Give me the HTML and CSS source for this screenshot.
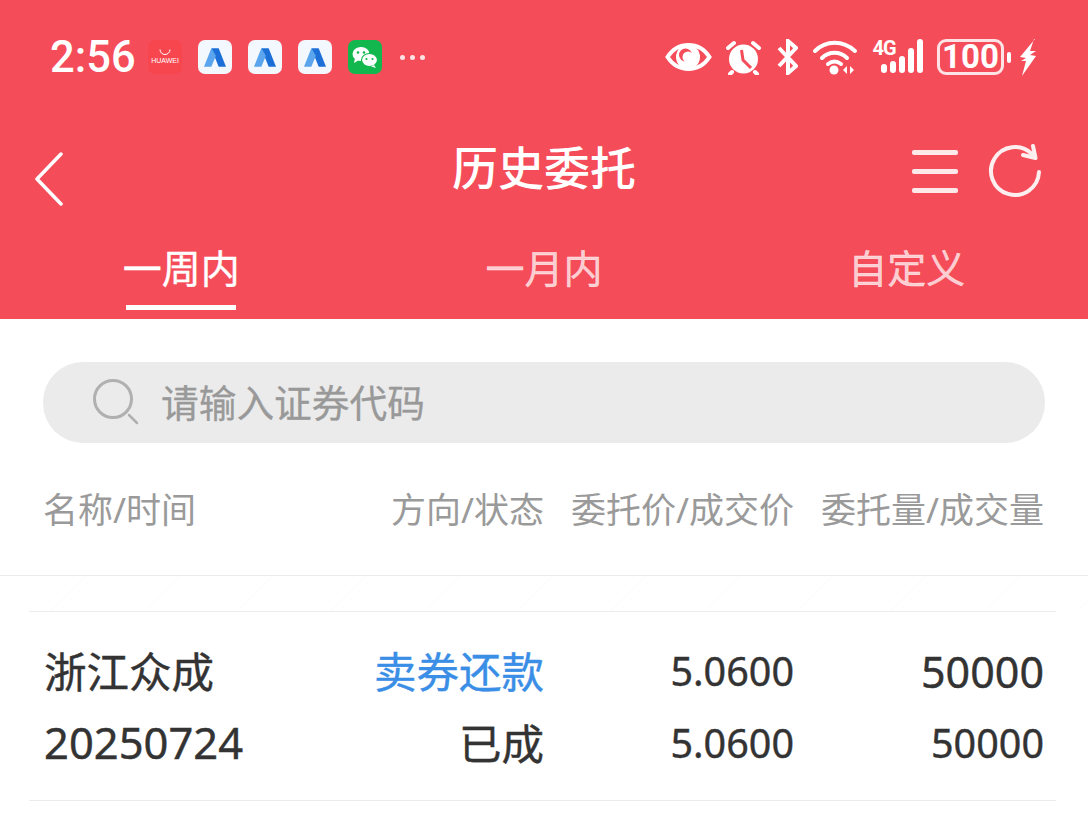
FILE: index.html
```html
<!DOCTYPE html>
<html lang="zh-CN">

<head>
    <title>历史委托</title>
    <meta name="viewport" content="width=device-width, initial-scale=1.0">
    <link rel="stylesheet" href="styles.css">
</head>

<body>
    <header class="top">
        <!-- Status Bar -->
        <div class="status-bar">
            <div class="status-left">
                <span class="time">2:56</span>
                <div class="app-icons">
                    <div class="app-icon huawei">
                        <svg width="16" height="6" viewBox="0 0 16 6" fill="none" stroke="white" stroke-width="1">
                            <path d="M3 0.5a5 5 0 0 0 10 0"></path>
                        </svg>
                        <span>HUAWEI</span>
                    </div>
                    <div class="app-icon ads">
                        <svg width="22" height="19" viewBox="0 0 24 20">
                            <path d="M8 0h8l8 20h-8z" fill="#1c6fd6"></path>
                            <path d="M8 0l5 8-5 12H0z" fill="#5aa5ee"></path>
                        </svg>
                    </div>
                    <div class="app-icon ads">
                        <svg width="22" height="19" viewBox="0 0 24 20">
                            <path d="M8 0h8l8 20h-8z" fill="#1c6fd6"></path>
                            <path d="M8 0l5 8-5 12H0z" fill="#5aa5ee"></path>
                        </svg>
                    </div>
                    <div class="app-icon ads">
                        <svg width="22" height="19" viewBox="0 0 24 20">
                            <path d="M8 0h8l8 20h-8z" fill="#1c6fd6"></path>
                            <path d="M8 0l5 8-5 12H0z" fill="#5aa5ee"></path>
                        </svg>
                    </div>
                    <div class="app-icon wechat">
                        <svg width="28" height="24" viewBox="0 0 28 24">
                            <ellipse cx="10" cy="9" rx="8.500" ry="7" fill="white"></ellipse>
                            <path d="M4 13l-1 5 5-3z" fill="white"></path>
                            <ellipse cx="18.500" cy="15" rx="8" ry="6.500" fill="white" stroke="#12b84e" stroke-width="1.200"></ellipse>
                            <path d="M23 20l2 3-5-1.500z" fill="white"></path>
                            <circle cx="7" cy="7.500" r="1.300" fill="#12b84e"></circle>
                            <circle cx="13" cy="7.500" r="1.300" fill="#12b84e"></circle>
                            <circle cx="15.500" cy="14" r="1.100" fill="#12b84e"></circle>
                            <circle cx="21.500" cy="14" r="1.100" fill="#12b84e"></circle>
                        </svg>
                    </div>
                    <div class="more-dots"><i></i><i></i><i></i></div>
                </div>
            </div>
            <div class="status-right">
                <!-- Eye -->
                <svg width="47" height="30" viewBox="0 0 47 30">
                    <path d="M2.500 15C8 6.500 15 3 23.500 3S39 6.500 44.500 15C39 23.500 32 27 23.500 27S8 23.500 2.500 15z" fill="none" stroke="white" stroke-width="4"></path>
                    <circle cx="23" cy="15" r="12" fill="white"></circle>
                    <circle cx="20.500" cy="13" r="6.500" fill="#f54c5a"></circle>
                    <circle cx="23" cy="15" r="5.500" fill="white"></circle>
                </svg>
                <!-- Alarm -->
                <svg width="36" height="36" viewBox="0 0 36 36">
                    <circle cx="17.500" cy="20" r="14.500" fill="white"></circle>
                    <path d="M2 9l6-5M33 9l-6-5M6 33l-2 2M29 33l2 2" stroke="white" stroke-width="4" stroke-linecap="round"></path>
                    <path d="M15.500 11l1.500 10 8 8" fill="none" stroke="#f54c5a" stroke-width="3"></path>
                </svg>
                <!-- Bluetooth -->
                <svg width="21" height="36" viewBox="0 0 21 36" fill="none" stroke="white" stroke-width="4">
                    <path d="M2 9l17 18-8 7V2l8 7L2 27"></path>
                </svg>
                <!-- Wifi -->
                <svg width="46" height="36" viewBox="0 0 46 36" fill="none" stroke="white" stroke-width="4" stroke-linecap="round">
                    <path d="M3 12C14 1 31 1 43 12"></path>
                    <path d="M10 19c7-7 18-7 25 0"></path>
                    <path d="M16 25c4-3 9-3 13 0"></path>
                    <circle cx="22" cy="31" r="4.500" fill="white" stroke="none"></circle>
                    <path d="M35 27l-4 4 4 4zM38 27l4 4-4 4z" fill="white" stroke="none"></path>
                </svg>
                <!-- 4G + signal -->
                <div class="signal">
                    <span class="net">4G</span>
                    <div class="bars"><i class="b1"></i><i class="b2"></i><i class="b3"></i><i class="b4"></i><i class="b5"></i></div>
                </div>
                <!-- Battery -->
                <div class="battery">
                    <div class="battery-body">100</div>
                    <div class="battery-tip"></div>
                </div>
                <!-- Charging bolt -->
                <svg class="bolt" width="18" height="37" viewBox="0 0 18 37">
                    <path d="M16 0L1 18l6 1-5 3h5L3 37l14-20-6-1 6-4h-6l4-12z" fill="white"></path>
                </svg>
            </div>
        </div>

        <!-- Navigation -->
        <nav class="nav-bar">
            <svg class="back" width="28" height="54" viewBox="0 0 28 54" fill="none" stroke="white" stroke-width="3.500" stroke-linecap="round" stroke-linejoin="round">
                <path d="M26 2L2 27l24 25"></path>
            </svg>
            <h1 class="nav-title">历史委托</h1>
            <div class="nav-actions">
                <div class="menu-btn"><i></i><i></i><i></i></div>
                <svg width="54" height="54" viewBox="0 0 54 54" fill="none" stroke="#fdeef0" stroke-width="4" stroke-linecap="round" stroke-linejoin="round">
                    <path d="M51 28A24 24 0 1 1 44 10"></path>
                    <path d="M45 2l2.500 12L35 11"></path>
                </svg>
            </div>
        </nav>

        <!-- Tabs -->
        <div class="tabs">
            <div class="tab active">一周内</div>
            <div class="tab">一月内</div>
            <div class="tab">自定义</div>
        </div>
    </header>

    <!-- Search -->
    <section class="search-wrap">
        <div class="search-box">
            <svg width="48" height="48" viewBox="0 0 48 48" fill="none" stroke="#b0b0b0" stroke-width="3" stroke-linecap="round">
                <circle cx="20" cy="20" r="18.500"></circle>
                <path d="M36 36l8 8" stroke-width="2.500"></path>
            </svg>
            <span class="search-hint">请输入证券代码</span>
        </div>
    </section>

    <!-- Table -->
    <div class="table-head">
        <div>名称/时间</div>
        <div class="num">方向/状态</div>
        <div class="num">委托价/成交价</div>
        <div class="num">委托量/成交量</div>
    </div>
    <div class="band"></div>

    <div class="order-row">
        <div class="cell-line">
            <div class="stock">浙江众成</div>
            <div class="num dir">卖券还款</div>
            <div class="num price">5.0600</div>
            <div class="num price qty">50000</div>
        </div>
        <div class="cell-line">
            <div class="stock date">20250724</div>
            <div class="num stock">已成</div>
            <div class="num price">5.0600</div>
            <div class="num price">50000</div>
        </div>
    </div>
</body>

</html>
```
FILE: styles.css
```css
* {
    box-sizing: border-box;
}

body {
    font-family: "Noto Sans", "Noto Sans CJK SC", sans-serif;
    background-color: white;
    margin: 0;
    padding: 0;
    height: 825px;
    overflow: hidden;
}

.top {
    background-color: #f54c5a;
    color: white;
    height: 319px;
}

/* Status bar */
.status-bar {
    display: flex;
    justify-content: space-between;
    align-items: center;
    height: 114px;
    padding: 0 51px 0 50px;
}

.status-left,
.status-right,
.app-icons {
    display: flex;
    align-items: center;
}

.time {
    font-family: Roboto, sans-serif;
    font-size: 43.500px;
    font-weight: 500;
    width: 98px;
}

.app-icons {
    gap: 16px;
}

.app-icon {
    display: flex;
    align-items: center;
    justify-content: center;
    width: 34px;
    height: 34px;
    border-radius: 7px;
}

.huawei {
    flex-direction: column;
    background-color: #f8464f;
    gap: 2px;
}

.huawei span {
    font-family: "Liberation Sans", sans-serif;
    font-size: 7px;
    line-height: 8px;
}

.ads {
    background-color: #f3f8fe;
}

.wechat {
    background-color: #12b84e;
}

.more-dots {
    display: flex;
    gap: 5px;
    margin-left: 2px;
}

.more-dots i {
    width: 5px;
    height: 5px;
    border-radius: 50%;
    background-color: #fde3e5;
}

.status-right {
    gap: 14.500px;
}

.signal {
    position: relative;
    width: 50px;
    height: 36px;
}

.net {
    position: absolute;
    left: 0;
    top: 0;
    font-family: Roboto, sans-serif;
    font-size: 20px;
    line-height: 18px;
    font-weight: 700;
    letter-spacing: -1px;
}

.bars {
    display: flex;
    align-items: flex-end;
    justify-content: flex-end;
    gap: 3px;
    height: 34px;
}

.bars i {
    width: 6px;
    border-radius: 3px;
    background-color: white;
}

.bars .b1 {
    height: 9px;
}

.bars .b2 {
    height: 12px;
}

.bars .b3 {
    height: 17px;
}

.bars .b4 {
    height: 25px;
}

.bars .b5 {
    height: 34px;
}

.battery {
    display: flex;
    align-items: center;
    gap: 3px;
}

.battery-body {
    width: 67px;
    height: 36px;
    border: 3px solid #fde3e5;
    border-radius: 9px;
    font-family: Roboto, sans-serif;
    font-size: 33px;
    font-weight: 700;
    line-height: 30px;
    text-align: center;
}

.battery-tip {
    width: 4px;
    height: 11px;
    border-radius: 2px;
    background-color: white;
}

.bolt {
    margin-left: -6.500px;
}

/* Nav bar */
.nav-bar {
    display: grid;
    grid-template-columns: 1fr auto 1fr;
    align-items: center;
    height: 110px;
    padding: 0 46px;
}

.back {
    margin: 20px 0 0 -11px;
}

.nav-title {
    margin: 0;
    padding-bottom: 4px;
    font-size: 46px;
    font-weight: 500;
    line-height: 60px;
}

.nav-actions {
    display: flex;
    align-items: center;
    justify-content: flex-end;
    gap: 30px;
    margin-top: 4px;
}

.menu-btn {
    display: flex;
    flex-direction: column;
    gap: 14px;
    width: 46px;
}

.menu-btn i {
    height: 5px;
    border-radius: 2px;
    background-color: #fde9ea;
}

/* Tabs */
.tabs {
    display: grid;
    grid-template-columns: repeat(3, 1fr);
    padding-top: 18px;
}

.tab {
    text-align: center;
    font-size: 39px;
    line-height: 52px;
    -webkit-text-stroke: 0.4px;
    color: rgba(255, 255, 255, 0.72);
    position: relative;
}

.tab.active {
    color: white;
}

.tab.active::after {
    content: "";
    position: absolute;
    left: 126px;
    top: 63px;
    width: 110px;
    height: 5px;
    background-color: white;
}

/* Search */
.search-wrap {
    padding: 43px 43px 0;
}

.search-box {
    display: flex;
    align-items: center;
    gap: 20px;
    height: 81px;
    padding-left: 50px;
    border-radius: 40px;
    background-color: #ebebeb;
}

.search-hint {
    padding-bottom: 4px;
    font-size: 37.700px;
    -webkit-text-stroke: 0.3px;
    color: #999;
}

/* Table */
.table-head,
.cell-line {
    display: grid;
    grid-template-columns: 300px 200px 250px 250px;
    align-items: center;
}

.table-head {
    grid-template-columns: 301px 200px 250px 250px;
    height: 133px;
    padding: 0 43px 3px 43px;
    border-bottom: 1px solid #ececec;
    font-size: 35px;
    color: #9a9a9a;
}

.num {
    text-align: right;
}

.band {
    height: 35px;
    background: repeating-linear-gradient(135deg, white 0 60px, #fdfdfd 60px 62px, white 62px 66px);
}

.order-row {
    margin: 0 32px 0 29px;
    padding: 21px 12px 20px 15px;
    height: 190px;
    border-top: 1px solid #ececec;
    border-bottom: 1px solid #ececec;
    color: #333;
}

.cell-line {
    height: 72px;
}

.stock {
    font-size: 42.500px;
    -webkit-text-stroke: 0.4px;
}

.date {
    font-family: "Noto Sans", sans-serif;
    font-size: 43.500px;
    padding-top: 2px;
}

.dir {
    font-size: 42.500px;
    -webkit-text-stroke: 0.4px;
    color: #3a8ee6;
}

.price {
    padding-top: 4px;
    font-size: 39.500px;
    -webkit-text-stroke: 0.4px;
}

.qty {
    font-size: 43px;
}
```
